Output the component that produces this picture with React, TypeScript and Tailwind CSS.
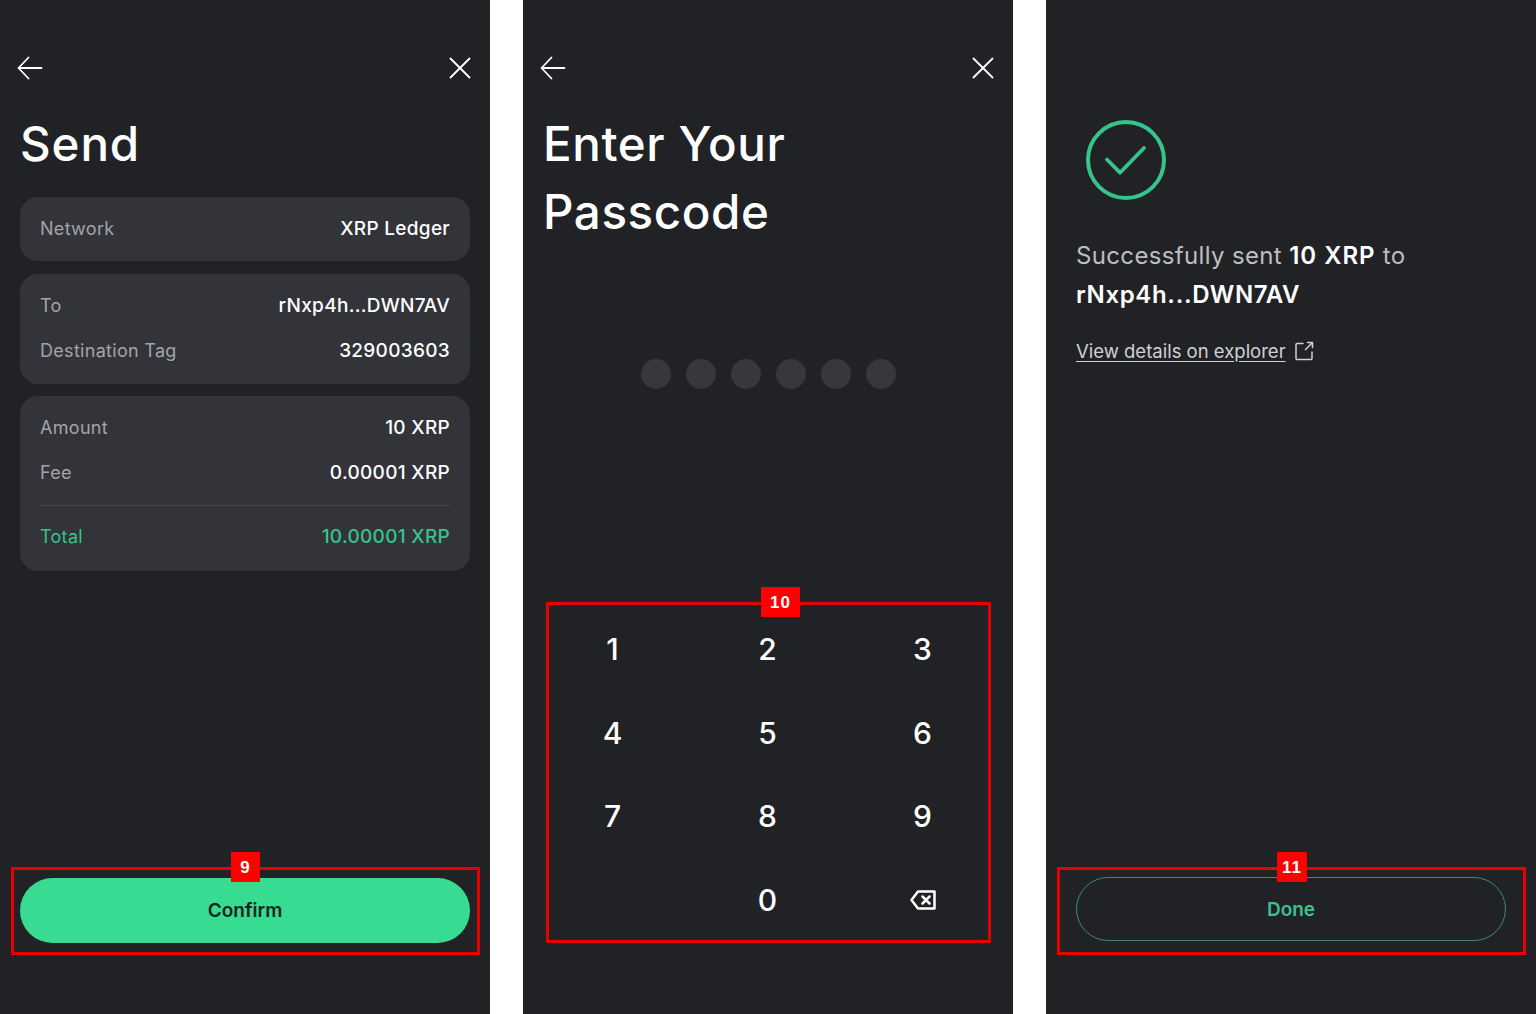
import type { ReactNode } from "react";

const keys = ["1", "2", "3", "4", "5", "6", "7", "8", "9"];
const dots = [0, 1, 2, 3, 4, 5];

function Header() {
  return (
    <div className="flex h-[30px] items-center justify-between pl-[17px] pr-[19px] text-white">
      <svg width="26" height="24" viewBox="0 0 26 24" fill="none" stroke="currentColor" strokeWidth="1.800" strokeLinecap="round" strokeLinejoin="round">
        <path d="M24.500 12H1.500M11.500 1.500 1.500 12l10 10.500" />
      </svg>
      <svg width="22" height="22" viewBox="0 0 22 22" fill="none" stroke="currentColor" strokeWidth="1.800" strokeLinecap="round">
        <path d="M1.500 1.500 20.500 20.500M20.500 1.500 1.500 20.500" />
      </svg>
    </div>
  );
}

function Row({ label, value, green }: { label: string; value: string; green?: boolean }) {
  return (
    <div className={`flex h-[24px] items-baseline justify-between leading-[24px] ${green ? "text-[#35c48b]" : ""}`}>
      <span className={`text-[18px] tracking-[0.3px] ${green ? "" : "text-[#a3a4a7]"}`}>{label}</span>
      <span className={`text-[19px] font-medium tracking-[0.3px] ${green ? "" : "text-white"}`}>{value}</span>
    </div>
  );
}

function Card({ className, children }: { className: string; children: ReactNode }) {
  return <div className={`rounded-[18px] bg-[#33343a] px-5 ${className}`}>{children}</div>;
}

function Marker({ n, box, badge }: { n: string; box: string; badge: string }) {
  return (
    <>
      <div className={`pointer-events-none absolute border-[3px] border-[#e60000] ${box}`} />
      <div className={`absolute flex h-[30px] items-center justify-center bg-[#fe0000] pt-px font-['Liberation_Sans',sans-serif] text-[17px] font-bold tracking-[1px] text-white ${badge}`}>
        {n}
      </div>
    </>
  );
}

function SendScreen() {
  return (
    <div className="relative flex h-full w-[490px] flex-col bg-[#212226] pt-[53px]">
      <Header />
      <h1 className="mt-[27px] pl-[20px] text-[47.5px] font-medium leading-[68px] tracking-[0.9px] text-white">Send</h1>
      <div className="mt-[19px] flex flex-col gap-[12px] px-5">
        <Card className="mb-px flex h-[64px] flex-col justify-center">
          <Row label="Network" value="XRP Ledger" />
        </Card>
        <Card className="flex h-[110px] flex-col justify-center gap-[21px] pb-px">
          <Row label="To" value="rNxp4h...DWN7AV" />
          <Row label="Destination Tag" value="329003603" />
        </Card>
        <Card className="flex h-[175px] flex-col pt-[20px]">
          <div className="flex flex-col gap-[21px]">
            <Row label="Amount" value="10 XRP" />
            <Row label="Fee" value="0.00001 XRP" />
          </div>
          <div className="mb-[19px] mt-[20px] h-px bg-[#48494e]" />
          <Row label="Total" value="10.00001 XRP" green />
        </Card>
      </div>
      <div className="mx-5 mb-[71px] mt-auto flex h-[65px] items-center justify-center rounded-full bg-[#37db92] pt-px text-[19px] font-semibold text-[#14261c]">
        Confirm
      </div>
      <Marker n="9" box="left-[11px] top-[867px] h-[88px] w-[469px]" badge="left-[231px] top-[852px] w-[29px]" />
    </div>
  );
}

function PasscodeScreen() {
  return (
    <div className="relative flex h-full w-[490px] flex-col bg-[#212226] pt-[53px]">
      <Header />
      <h1 className="mt-[27px] pl-[20px] text-[47.5px] font-medium leading-[68px] tracking-[0.6px] text-white">
        Enter Your
        <br />
        Passcode
      </h1>
      <div className="mt-[113px] flex justify-center gap-[15px]">
        {dots.map((d) => (
          <div key={d} className="size-[30px] rounded-full bg-[#37383c]" />
        ))}
      </div>
      <div className="mt-[219px] grid grid-cols-3 pl-[12px] pr-[13px] text-[30px] font-medium text-white">
        {keys.map((k) => (
          <div key={k} className="flex h-[83.5px] items-center justify-center">
            {k}
          </div>
        ))}
        <div />
        <div className="flex h-[83.5px] items-center justify-center">0</div>
        <div className="flex h-[83.5px] items-center justify-center">
          <svg width="26" height="20" viewBox="0 0 26 20" fill="none" stroke="currentColor" strokeWidth="2.500" strokeLinejoin="round" strokeLinecap="round">
            <path d="M8 1.500h16.500v17H8L1.500 10zM12.500 6.500l7 7M19.500 6.500l-7 7" />
          </svg>
        </div>
      </div>
      <Marker n="10" box="left-[23px] top-[602px] h-[341px] w-[445px]" badge="left-[238px] top-[587px] w-[39px]" />
    </div>
  );
}

function DoneScreen() {
  return (
    <div className="relative flex h-full w-[490px] flex-col bg-[#212226] pl-[30px] pt-[120px]">
      <svg className="ml-[10px]" width="80" height="80" viewBox="0 0 80 80" fill="none" stroke="#35c48b" strokeLinecap="round" strokeLinejoin="round">
        <circle cx="40" cy="40" r="38" strokeWidth="4" />
        <path d="M21 39.500 34 52.700 58 28" strokeWidth="3.800" />
      </svg>
      <p className="mt-[36px] text-[24px] leading-[39px] tracking-[0.35px] text-[#bdbec0]">
        Successfully sent <span className="font-semibold tracking-[1px] text-white">10 XRP</span> to
        <br />
        <span className="font-semibold tracking-[0.65px] text-white">rNxp4h...DWN7AV</span>
      </p>
      <div className="mt-[24px] flex items-center gap-[8px] text-[18.500px] leading-[26px] text-[#d0d1d2]">
        <span className="underline underline-offset-[3px]">View details on explorer</span>
        <svg width="20" height="20" viewBox="0 0 20 20" fill="none" stroke="currentColor" strokeWidth="1.500" strokeLinecap="round" strokeLinejoin="round">
          <path d="M9 2.500H3a1 1 0 0 0-1 1v14a1 1 0 0 0 1 1h14a1 1 0 0 0 1-1V11M11.500 8.500l7-7M13.500 1.500h5v5" />
        </svg>
      </div>
      <div className="mb-[73px] mr-[30px] mt-auto flex h-[64px] items-center justify-center rounded-full border border-[#3f8a70] pt-[2px] text-[19px] font-semibold text-[#3fbf8f]">
        Done
      </div>
      <Marker n="11" box="left-[11px] top-[867px] h-[88px] w-[469px]" badge="left-[231px] top-[852px] w-[30px]" />
    </div>
  );
}

export default function App() {
  return (
    <div className="flex h-[1014px] w-[1536px] justify-between overflow-hidden bg-white font-['Inter',sans-serif]">
      <SendScreen />
      <PasscodeScreen />
      <DoneScreen />
    </div>
  );
}
